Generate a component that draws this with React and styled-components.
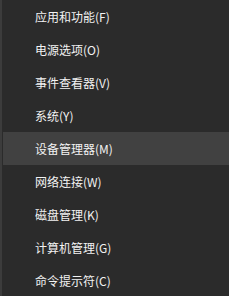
import React from "react";
import styled, { createGlobalStyle } from "styled-components";

const Global = createGlobalStyle`
  html, body { margin: 0; padding: 0; background: #2b2b2b; }
  body { width: 229px; height: 296px; overflow: hidden; }
`;

const Menu = styled.div`
  width: 229px;
  height: 296px;
  background: #2b2b2b;
  border-left: 2px solid #3c3c3c;
  box-sizing: border-box;
  display: flex;
  flex-direction: column;
  padding-left: 1px;
`;

const Item = styled.div`
  height: 33px;
  flex: none;
  display: flex;
  align-items: center;
  padding-left: 32px;
  background: ${(p) => (p.$active ? "#414141" : "transparent")};
  color: #f2f2f2;
  font-family: "Noto Sans CJK SC", "Microsoft YaHei", sans-serif;
  font-size: 12px;
  white-space: nowrap;
`;

const items = [
  "应用和功能(F)",
  "电源选项(O)",
  "事件查看器(V)",
  "系统(Y)",
  "设备管理器(M)",
  "网络连接(W)",
  "磁盘管理(K)",
  "计算机管理(G)",
  "命令提示符(C)",
];

export default function App() {
  return (
    <>
      <Global />
      <Menu>
        {items.map((t, i) => (
          <Item key={t} $active={i === 4}>
            {t}
          </Item>
        ))}
      </Menu>
    </>
  );
}
